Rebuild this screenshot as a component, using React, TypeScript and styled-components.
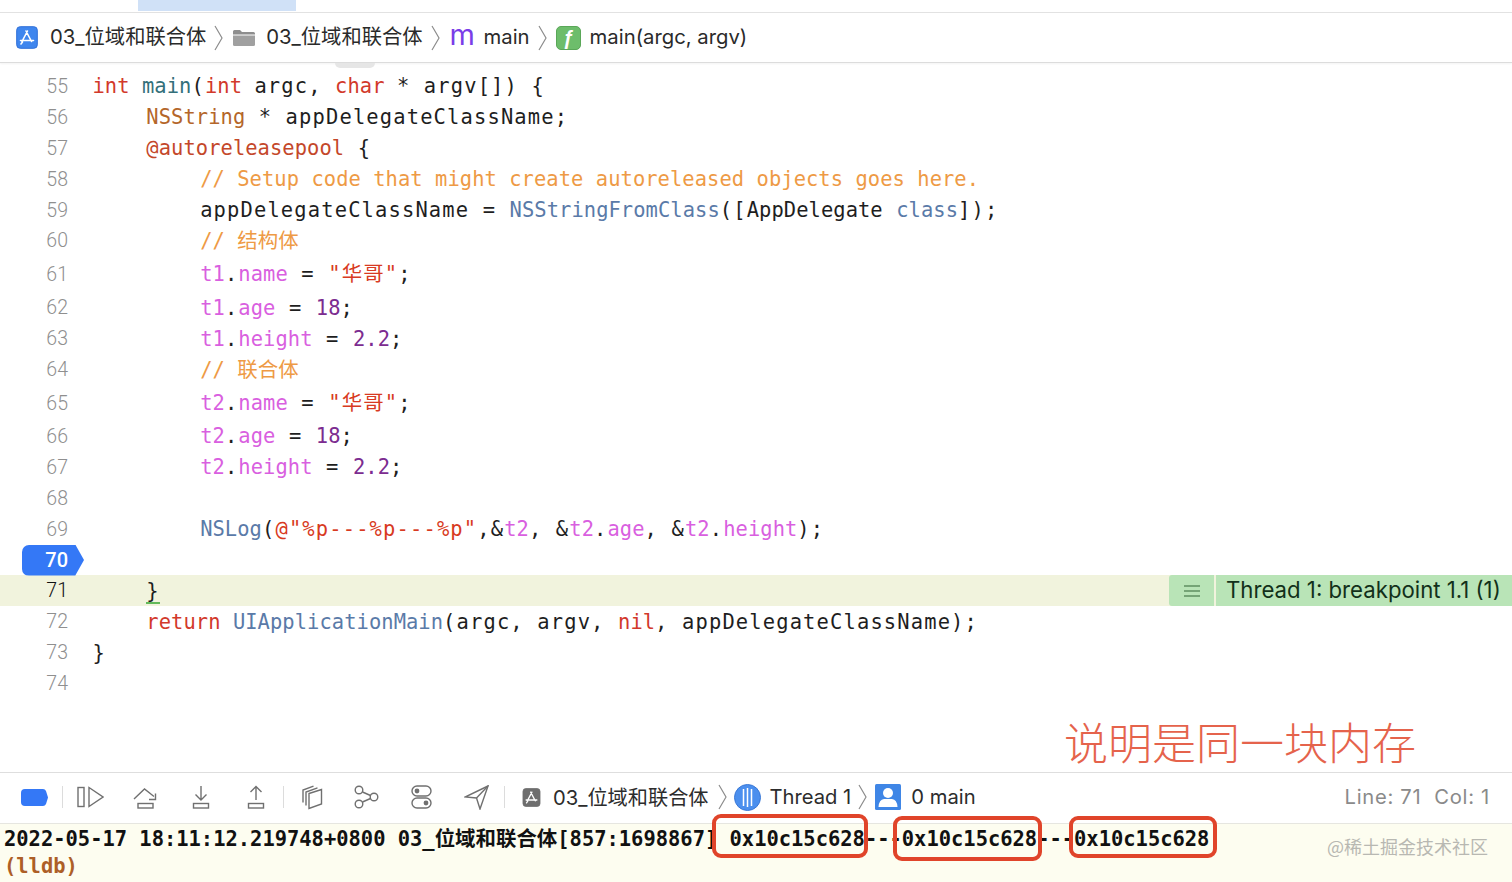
import React from "react";
import styled, { createGlobalStyle } from "styled-components";

const Global = createGlobalStyle`
  html, body { margin: 0; padding: 0; background: #fff; overflow: hidden; }
`;

const UI = `Inter, "Noto Sans CJK SC", sans-serif`;
const MONO = `"DejaVu Sans Mono", "Noto Sans CJK SC", monospace`;
const NUM = `Roboto, Inter, sans-serif`;

const Page = styled.div`
  position: relative;
  width: 1512px;
  height: 882px;
  overflow: hidden;
  display: flex;
  flex-direction: column;
  background: #fff;
  font-family: ${UI};
`;

const TabStrip = styled.div`
  height: 12px;
  flex: none;
  padding-left: 138px;
  border-bottom: 1px solid #e2e2e2;
`;
const ActiveTab = styled.div`
  width: 158px;
  height: 11px;
  background: #d0e1f7;
`;

const JumpBar = styled.div`
  height: 49px;
  flex: none;
  box-sizing: content-box;
  display: flex;
  align-items: center;
  padding-left: 16px;
  border-bottom: 1px solid #dcdcdc;
  box-shadow: 0 1px 2px rgba(0, 0, 0, 0.05);
  color: #2a2a2a;
  font-size: 20.3px;
  white-space: nowrap;
`;
const Crumb = styled.span<{ $ml?: number }>`
  margin-left: ${(p) => p.$ml ?? 0}px;
  line-height: 26px;
  position: relative;
  top: -1px;
`;
const MethodGlyph = styled.span`
  margin-left: 10px;
  width: 34px;
  color: #7a3de8;
  font-size: 29px;
  line-height: 26px;
  position: relative;
  top: -3px;
`;
const FnBadge = styled.span`
  margin-left: 9px;
  width: 25px;
  height: 24px;
  border-radius: 5px;
  background: #6dbd6b;
  border: 1px solid #5aa758;
  box-sizing: border-box;
  color: #fff;
  font: italic 700 20px/22px "Liberation Sans", sans-serif;
  text-align: center;
`;
const Chevron = styled.svg<{ $ml: number }>`
  margin-left: ${(p) => p.$ml}px;
  flex: none;
`;

const Editor = styled.div`
  flex: 1;
  min-height: 0;
  display: flex;
  flex-direction: column;
  font-family: ${MONO};
  font-size: 20.45px;
  color: #1e1e1e;
  overflow: hidden;
`;
const ClippedLine = styled.div`
  height: 8px;
  flex: none;
  padding-left: 335px;
`;
const ClippedPill = styled.div`
  width: 40px;
  height: 5px;
  background: #e6e6e6;
  border-radius: 0 0 5px 5px;
`;
const Row = styled.div<{ $tall?: boolean; $current?: boolean }>`
  height: ${(p) => (p.$tall ? 36 : 30.9)}px;
  flex: none;
  display: flex;
  align-items: center;
  white-space: pre;
  background: ${(p) => (p.$current ? "#f1f3dd" : "transparent")};
`;
const LineNo = styled.div<{ $current?: boolean }>`
  width: 68px;
  margin-right: 1px;
  flex: none;
  text-align: right;
  font-family: ${NUM};
  font-size: 19.5px;
  font-weight: 300;
  color: ${(p) => (p.$current ? "#111" : "#8f8f8f")};
`;
const BreakCell = styled.div`
  width: 69px;
  flex: none;
  padding-left: 22px;
  box-sizing: border-box;
`;
const BreakArrow = styled.div`
  width: 62px;
  height: 31px;
  box-sizing: border-box;
  padding-right: 16px;
  background: #3478f6;
  border-radius: 7px 0 0 7px;
  clip-path: polygon(0 0, 86% 0, 100% 50%, 86% 100%, 0 100%);
  color: #fff;
  text-align: right;
  font-size: 20px;
  line-height: 31px;
  font-family: ${NUM};
  font-weight: 500;
`;
const Code = styled.div`
  padding-left: 23.5px;
  flex: none;
  line-height: 30px;
  letter-spacing: 1.15px;
`;
const Tok = styled.span<{ $c: string; $wide?: boolean }>`
  color: ${(p) => p.$c};
  letter-spacing: ${(p) => (p.$wide ? 1.15 : 0.06)}px;
`;
const Matched = styled.span`
  border-bottom: 2px solid #62b95a;
  display: inline-block;
  line-height: 22px;
`;
const Banner = styled.div`
  margin-left: auto;
  display: flex;
  height: 100%;
  font-family: ${UI};
  font-size: 22.2px;
  color: #12301a;
  letter-spacing: 0;
`;
const BannerMenu = styled.div`
  width: 45px;
  display: flex;
  align-items: center;
  justify-content: center;
  background: #b9e4b7;
  border-radius: 3px 0 0 3px;
  margin-right: 2px;
`;
const BannerText = styled.div`
  width: 296px;
  box-sizing: border-box;
  padding-left: 10px;
  background: #b9e4b7;
  line-height: 30px;
`;

const DebugBar = styled.div`
  height: 51px;
  box-sizing: border-box;
  padding-bottom: 2px;
  flex: none;
  display: flex;
  align-items: center;
  padding-left: 21px;
  border-top: 1px solid #dedede;
  font-size: 20.2px;
  color: #2c2c2c;
  white-space: nowrap;
`;
const BreakToggle = styled.svg`
  width: 27px;
  height: 17px;
  flex: none;
  margin-right: 14px;
`;
const ToolSep = styled.span`
  width: 1px;
  height: 22px;
  flex: none;
  background: #dcdcdc;
`;
const ToolSlot = styled.span`
  width: 55px;
  flex: none;
  display: flex;
  justify-content: center;
  align-items: center;
`;
const DebugText = styled.span<{ $ml: number }>`
  margin-left: ${(p) => p.$ml}px;
  position: relative;
  top: -1px;
`;
const GreyApp = styled.span`
  margin-left: 17px;
  display: flex;
`;
const Cursor = styled.span`
  margin-left: auto;
  padding-right: 22px;
  color: #8a8a8a;
  letter-spacing: 0.72px;
  position: relative;
  top: -1px;
`;

const Console = styled.div`
  flex: none;
  height: 59px;
  box-sizing: border-box;
  background: #fdfdf0;
  border-top: 1px solid #e6e6e0;
  padding: 2px 0 0 4px;
  font-family: ${MONO};
  font-size: 20.45px;
  font-weight: 700;
  line-height: 27px;
  color: #111;
  white-space: pre;
`;
const Prompt = styled.div`
  color: #ad5f27;
`;

const RedBox = styled.div<{ $l: number; $t: number; $w: number; $h: number }>`
  position: absolute;
  left: ${(p) => p.$l}px;
  top: ${(p) => p.$t}px;
  width: ${(p) => p.$w}px;
  height: ${(p) => p.$h}px;
  box-sizing: border-box;
  border: 4px solid #e0442a;
  border-radius: 9px;
`;
const Note = styled.div`
  position: absolute;
  left: 1064px;
  top: 710px;
  font-family: "Noto Sans CJK SC", sans-serif;
  font-weight: 300;
  font-size: 44px;
  line-height: 62px;
  color: #e5634c;
  white-space: nowrap;
`;
const Watermark = styled.div`
  position: absolute;
  left: 1327px;
  top: 833px;
  font-family: "Noto Sans CJK SC", sans-serif;
  font-size: 18px;
  line-height: 26px;
  color: #b8b8b2;
  white-space: nowrap;
`;

const KW = "#d2392b";
const FN = "#33707a";
const TY = "#b4662a";
const API = "#5a7aa8";
const CM = "#ee9a45";
const PR = "#d95fe0";
const NM = "#7c2c90";
const ST = "#d83a22";
const DR = "#c4472a";
const INK = "#1e1e1e";

const K = ({ c, children }: { c: string; children: React.ReactNode }) => <Tok $c={c}>{children}</Tok>;
const S = ({ children }: { children: React.ReactNode }) => <Tok $c={ST} $wide>{children}</Tok>;

const Chev = ({ ml, h = 26 }: { ml: number; h?: number }) => (
  <Chevron $ml={ml} width="9" height={h} viewBox={`0 0 9 ${h}`} fill="none" stroke="#8c8c8c" strokeWidth="1.2">
    <path d={`M1 1 L8 ${h / 2} L1 ${h - 1}`} />
  </Chevron>
);

const AppIcon = ({ grey }: { grey?: boolean }) => (
  <svg width={grey ? 19 : 22} height={grey ? 19 : 23} viewBox="0 0 22 23" style={{ flex: "none" }}>
    <rect x="0.7" y="0.7" width="20.6" height="21.6" rx="3.5" fill={grey ? "#6e6e6e" : "#3f86ee"} stroke={grey ? "#6e6e6e" : "#2f6fd8"} />
    <path d="M11.5 5 L6 15.5 M10 5 L15.5 15.5 M4.5 14.5 H17.5 M5 18 L6.5 16" stroke="#fff" strokeWidth="1.6" fill="none" strokeLinecap="round" />
  </svg>
);

const Folder = () => (
  <svg width="24" height="18" viewBox="0 0 24 18" style={{ marginLeft: 9, flex: "none" }}>
    <path d="M1 2.5 Q1 1 2.5 1 H8 L10 3 H21.5 Q23 3 23 4.5 V5.5 H1 Z" fill="#8e8e8e" />
    <path d="M1 6.5 H23 V15.5 Q23 17 21.5 17 H2.5 Q1 17 1 15.5 Z" fill="#a0a0a0" />
  </svg>
);

const G = { fill: "none", stroke: "#707070", strokeWidth: 1.4 } as const;

const Continue = () => (
  <svg width="27" height="22" viewBox="0 0 27 22" {...G}>
    <rect x="1" y="1.5" width="6" height="19" />
    <path d="M12 1.5 L26 11 L12 20.5 Z" />
  </svg>
);
const StepOver = () => (
  <svg width="25" height="23" viewBox="0 0 25 23" {...G}>
    <path d="M1 13 L11.5 3 L21 10.5" />
    <path d="M16 13.5 H22.5 V7.5" />
    <rect x="5" y="17.5" width="15" height="4.5" />
  </svg>
);
const StepIn = () => (
  <svg width="18" height="24" viewBox="0 0 18 24" {...G}>
    <path d="M9 1 V15 M3.5 9.5 L9 15 L14.5 9.5" />
    <rect x="1.5" y="18.5" width="15" height="4.5" />
  </svg>
);
const StepOut = () => (
  <svg width="18" height="24" viewBox="0 0 18 24" {...G}>
    <path d="M9 15 V1.5 M3.5 7 L9 1.5 L14.5 7" />
    <rect x="1.5" y="18.5" width="15" height="4.5" />
  </svg>
);
const Frames = () => (
  <svg width="22" height="25" viewBox="0 0 22 25" {...G}>
    <path d="M8 8.5 L20.5 4.5 V19 L8 23.5 Z" />
    <path d="M5 20.5 V7 L16.5 2.8" />
    <path d="M2 17.5 V5 L12.5 1.2" />
  </svg>
);
const Graph = () => (
  <svg width="25" height="24" viewBox="0 0 25 24" {...G}>
    <circle cx="5" cy="5" r="3.8" />
    <circle cx="5" cy="19" r="3.8" />
    <circle cx="20" cy="12" r="3.8" />
    <path d="M8.5 7 L16.5 10.5 M8.5 17 L16.5 13.5" />
  </svg>
);
const Switches = () => (
  <svg width="21" height="24" viewBox="0 0 21 24" {...G}>
    <rect x="1" y="1" width="19" height="10" rx="5" />
    <rect x="1" y="13" width="19" height="10" rx="5" />
    <circle cx="6" cy="6" r="2.4" fill="#707070" stroke="none" />
    <circle cx="15" cy="18" r="2.4" fill="#707070" stroke="none" />
  </svg>
);
const Locate = () => (
  <svg width="25" height="25" viewBox="0 0 25 25" {...G}>
    <path d="M24 1 L1 12 L12.5 13 L16 24 Z" />
    <path d="M24 1 L12.5 13" />
  </svg>
);
const ThreadIcon = () => (
  <svg width="27" height="27" viewBox="0 0 27 27" style={{ marginLeft: 7, flex: "none" }}>
    <circle cx="13.5" cy="13.5" r="13" fill="#4b8fee" stroke="#3a78d6" />
    <path d="M9.5 5 V22 M13.5 4 V23 M17.5 5 V22" stroke="#fff" strokeWidth="1.5" />
  </svg>
);
const PersonIcon = () => (
  <svg width="26" height="26" viewBox="0 0 26 26" style={{ marginLeft: 8, flex: "none" }}>
    <rect width="26" height="26" rx="1.5" fill="#3f86e6" />
    <circle cx="13" cy="9" r="5" fill="#fff" />
    <path d="M3.5 23 Q4 15.5 9 15 H17 Q22 15.5 22.5 23 Z" fill="#fff" />
  </svg>
);

type L = { n: number; tall?: boolean; code?: React.ReactNode };

const lines: L[] = [
  { n: 55, code: <><K c={KW}>int </K><K c={FN}>main</K>(<K c={KW}>int </K>argc, <K c={KW}>char </K>* argv[]) {"{"}</> },
  { n: 56, code: <>{"    "}<K c={TY}>NSString</K> * appDelegateClassName;</> },
  { n: 57, code: <>{"    "}<K c={DR}>@autoreleasepool</K> {"{"}</> },
  { n: 58, code: <>{"        "}<K c={CM}>// Setup code that might create autoreleased objects goes here.</K></> },
  { n: 59, code: <>{"        "}appDelegateClassName = <K c={API}>NSStringFromClass</K>([<K c={INK}>AppDelegate</K> <K c={API}>class</K>]);</> },
  { n: 60, code: <>{"        "}<K c={CM}>// 结构体</K></> },
  { n: 61, tall: true, code: <>{"        "}<K c={PR}>t1</K>.<K c={PR}>name</K> = <S>"华哥"</S>;</> },
  { n: 62, code: <>{"        "}<K c={PR}>t1</K>.<K c={PR}>age</K> = <K c={NM}>18</K>;</> },
  { n: 63, code: <>{"        "}<K c={PR}>t1</K>.<K c={PR}>height</K> = <K c={NM}>2.2</K>;</> },
  { n: 64, code: <>{"        "}<K c={CM}>// 联合体</K></> },
  { n: 65, tall: true, code: <>{"        "}<K c={PR}>t2</K>.<K c={PR}>name</K> = <S>"华哥"</S>;</> },
  { n: 66, code: <>{"        "}<K c={PR}>t2</K>.<K c={PR}>age</K> = <K c={NM}>18</K>;</> },
  { n: 67, code: <>{"        "}<K c={PR}>t2</K>.<K c={PR}>height</K> = <K c={NM}>2.2</K>;</> },
  { n: 68 },
  { n: 69, code: <>{"        "}<K c={API}>NSLog</K>(<S>@"%p---%p---%p"</S>,&amp;<K c={PR}>t2</K>, &amp;<K c={PR}>t2</K>.<K c={PR}>age</K>, &amp;<K c={PR}>t2</K>.<K c={PR}>height</K>);</> },
];

export default function App() {
  return (
    <Page>
      <Global />
      <TabStrip>
        <ActiveTab />
      </TabStrip>
      <JumpBar>
        <AppIcon />
        <Crumb $ml={12}>03_位域和联合体</Crumb>
        <Chev ml={8} />
        <Folder />
        <Crumb $ml={10}>03_位域和联合体</Crumb>
        <Chev ml={8} />
        <MethodGlyph>m</MethodGlyph>
        <Crumb>main</Crumb>
        <Chev ml={8} />
        <FnBadge>ƒ</FnBadge>
        <Crumb $ml={9}>main(argc, argv)</Crumb>
      </JumpBar>
      <Editor>
        <ClippedLine>
          <ClippedPill />
        </ClippedLine>
        {lines.map((l) => (
          <Row key={l.n} $tall={l.tall}>
            <LineNo>{l.n}</LineNo>
            <Code>{l.code}</Code>
          </Row>
        ))}
        <Row>
          <BreakCell>
            <BreakArrow>70</BreakArrow>
          </BreakCell>
        </Row>
        <Row $current>
          <LineNo $current>71</LineNo>
          <Code>
            {"    "}
            <Matched>{"}"}</Matched>
          </Code>
          <Banner>
            <BannerMenu>
              <svg width="16" height="12" viewBox="0 0 16 12" stroke="#5f8f62" strokeWidth="1.3">
                <path d="M0 1 H16 M0 6 H16 M0 11 H16" />
              </svg>
            </BannerMenu>
            <BannerText>Thread 1: breakpoint 1.1 (1)</BannerText>
          </Banner>
        </Row>
        <Row>
          <LineNo>72</LineNo>
          <Code>
            {"    "}
            <K c={KW}>return </K><K c={API}>UIApplicationMain</K>(argc, argv, <K c={KW}>nil</K>, appDelegateClassName);
          </Code>
        </Row>
        <Row>
          <LineNo>73</LineNo>
          <Code>{"}"}</Code>
        </Row>
        <Row>
          <LineNo>74</LineNo>
        </Row>
      </Editor>
      <DebugBar>
        <BreakToggle viewBox="0 0 27 17">
          <path d="M4 0 H22 Q24 0 25 2 L27 8.5 L25 15 Q24 17 22 17 H4 Q0 17 0 13 V4 Q0 0 4 0 Z" fill="#3478f6" />
        </BreakToggle>
        <ToolSep />
        <ToolSlot><Continue /></ToolSlot>
        <ToolSlot><StepOver /></ToolSlot>
        <ToolSlot><StepIn /></ToolSlot>
        <ToolSlot><StepOut /></ToolSlot>
        <ToolSep />
        <ToolSlot><Frames /></ToolSlot>
        <ToolSlot><Graph /></ToolSlot>
        <ToolSlot><Switches /></ToolSlot>
        <ToolSlot><Locate /></ToolSlot>
        <ToolSep />
        <GreyApp><AppIcon grey /></GreyApp>
        <DebugText $ml={12}>03_位域和联合体</DebugText>
        <Chev ml={9} />
        <ThreadIcon />
        <DebugText $ml={9}>Thread 1</DebugText>
        <Chev ml={7} />
        <PersonIcon />
        <DebugText $ml={10}>0 main</DebugText>
        <Cursor>Line: 71&nbsp;&nbsp;Col: 1</Cursor>
      </DebugBar>
      <Console>
        <div>2022-05-17 18:11:12.219748+0800 03_位域和联合体[857:1698867] 0x10c15c628---0x10c15c628---0x10c15c628</div>
        <Prompt>(lldb)</Prompt>
      </Console>
      <RedBox $l={712} $t={814} $w={156} $h={44} />
      <RedBox $l={893} $t={816} $w={149} $h={45} />
      <RedBox $l={1069} $t={816} $w={148} $h={42} />
      <Note>说明是同一块内存</Note>
      <Watermark>@稀土掘金技术社区</Watermark>
    </Page>
  );
}
